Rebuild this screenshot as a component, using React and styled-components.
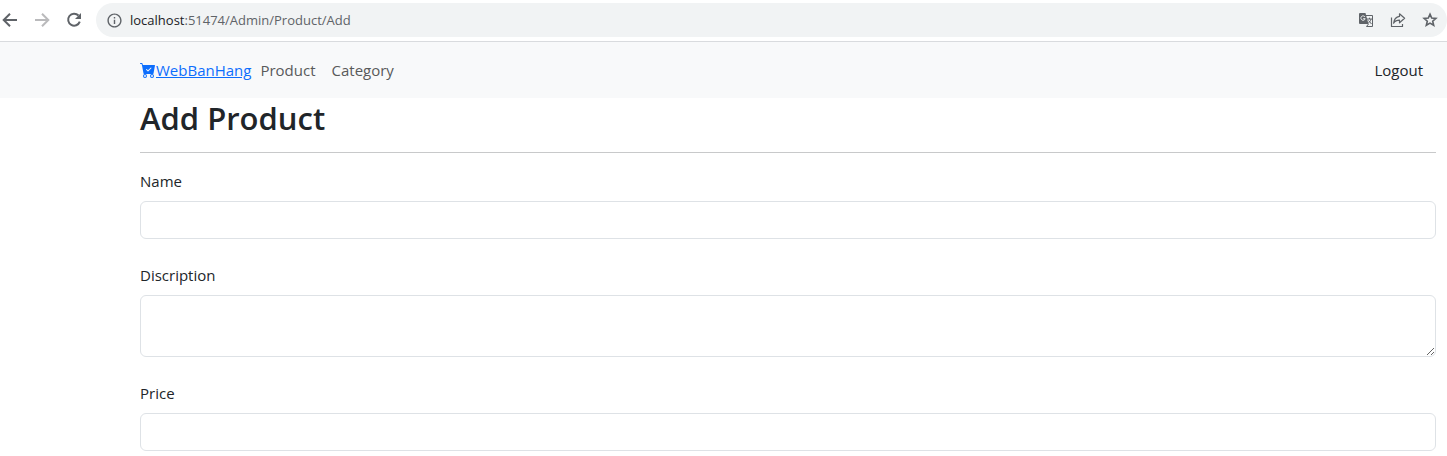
import React from "react";
import styled, { createGlobalStyle } from "styled-components";
import { MdInfoOutline } from "react-icons/md";
import { BsCartCheckFill } from "react-icons/bs";

const GlobalStyle = createGlobalStyle`
  *, *::before, *::after { box-sizing: border-box; }
  body {
    margin: 0;
    background: #fff;
    color: #212529;
    font-family: "Segoe UI", "Open Sans", "Noto Sans", sans-serif;
    font-size: 15px;
    line-height: 24px;
  }
`;

const Toolbar = styled.header`
  display: flex;
  align-items: center;
  gap: 12px;
  height: 42px;
  padding-bottom: 1px;
  border-bottom: 1px solid #d9dbde;
`;

const ToolButtons = styled.div`
  display: flex;
  align-items: center;
  gap: 12px;
`;

const IconButton = styled.button`
  display: flex;
  align-items: center;
  justify-content: center;
  width: 20px;
  height: 20px;
  padding: 0;
  border: 0;
  background: none;
  color: #5f6368;
  &:disabled { color: #bababc; }
  svg { flex: none; }
`;

const AddressBar = styled.div`
  display: flex;
  flex: 1;
  align-items: center;
  height: 34px;
  padding: 0 7px 0 8px;
  border-radius: 17px;
  background: #f1f3f4;
`;

const Address = styled.span`
  flex: 1;
  margin-left: 6px;
  font-size: 13px;
  line-height: 20px;
  color: #5f6368;
`;

const Host = styled.span`
  color: #202124;
`;

const Navbar = styled.nav`
  display: flex;
  align-items: center;
  height: 56px;
  padding: 0 24px 0 140px;
  background: #f8f9fa;
`;

const Brand = styled.a`
  display: flex;
  align-items: center;
  margin-right: 9px;
  color: #0d6efd;
  text-decoration: none;
  span { text-decoration: underline; }
`;

const NavLink = styled.a`
  margin-right: 16px;
  color: #595a5b;
  text-decoration: none;
`;

const Logout = styled.a`
  margin-left: auto;
  color: #212529;
  text-decoration: none;
`;

const Main = styled.main`
  padding: 0 11px 0 140px;
`;

const Title = styled.h1`
  margin: 0;
  padding-top: 2px;
  font-size: 31px;
  line-height: 36px;
  font-weight: 600;
`;

const Divider = styled.hr`
  margin: 16px 0;
  border: 0;
  border-top: 1px solid #c8c9ca;
`;

const Field = styled.div`
  display: flex;
  flex-direction: column;
  gap: 8px;
  margin-bottom: 24px;
  &:last-child { margin-bottom: 0; }
`;

const Label = styled.label`
  align-self: flex-start;
`;

const Input = styled.input`
  width: 100%;
  height: 38px;
  padding: 6px 12px;
  border: 1px solid #dee2e6;
  border-radius: 6px;
  background: #fff;
  color: inherit;
  font: inherit;
`;

const TextArea = styled.textarea`
  display: block;
  width: 100%;
  height: 62px;
  padding: 6px 12px;
  border: 1px solid #dee2e6;
  border-radius: 6px;
  background: #fff;
  color: inherit;
  font: inherit;
  resize: vertical;
`;

const PageActions = styled.div`
  display: flex;
  gap: 12px;
`;

function ArrowIcon({ forward }) {
  return (
    <svg width="20" height="20" viewBox="0 0 20 20" fill="none" stroke="currentColor" strokeWidth="2">
      {forward
        ? <path d="M3 10H16M10 3.700L16.300 10L10 16.300" />
        : <path d="M17 10H4M10 3.700L3.700 10L10 16.300" />}
    </svg>
  );
}

function ReloadIcon() {
  return (
    <svg width="20" height="20" viewBox="0 0 20 20" fill="none" stroke="currentColor" strokeWidth="2">
      <path d="M14.500 5.500A6 6 0 1 0 15.800 11.700" />
      <path d="M17 3V9H11Z" fill="currentColor" stroke="none" />
    </svg>
  );
}

function TranslateIcon() {
  return (
    <svg width="16" height="16" viewBox="0 0 16 16" fill="none" stroke="currentColor">
      <path d="M7.500 3.500H14.500V14.500H8.500" />
      <path d="M2 1H7.500L10.500 12H2A1 1 0 0 1 1 11V2A1 1 0 0 1 2 1Z" fill="currentColor" stroke="none" />
      <path d="M7 5A2.200 2.200 0 1 0 7.200 6.700H5.200" stroke="#f1f3f4" />
      <path d="M9 7H14M11.500 5.700V7M13 7C12.600 9 11.500 10.200 10.300 11M10.500 8.500L13.500 12M8.500 14.500L10.500 12" />
    </svg>
  );
}

function ShareIcon() {
  return (
    <svg width="16" height="16" viewBox="0 0 16 16" fill="none" stroke="currentColor" strokeWidth="1.2" strokeLinejoin="round">
      <path d="M1.5 5.5V14.500H12.500V12" />
      <path d="M9.5 1.8L14.6 6.3L9.5 10.8V8.2C6.7 8.2 4.8 9.2 3.6 11.2C4 7.600 5.900 5 9.500 4.400Z" />
    </svg>
  );
}

function StarIcon() {
  return (
    <svg width="18" height="18" viewBox="0 0 18 18" fill="none" stroke="currentColor" strokeWidth="1.6">
      <path d="M9 3.200L10.700 7L14.900 7.400L11.700 10.200L12.700 14.300L9 12.100L5.300 14.300L6.300 10.200L3.100 7.400L7.300 7Z" />
    </svg>
  );
}

export default function App() {
  return (
    <>
      <GlobalStyle />
      <Toolbar>
        <ToolButtons>
          <IconButton aria-label="Back"><ArrowIcon /></IconButton>
          <IconButton aria-label="Forward" disabled><ArrowIcon forward /></IconButton>
          <IconButton aria-label="Reload"><ReloadIcon /></IconButton>
        </ToolButtons>
        <AddressBar>
          <IconButton aria-label="Site information"><MdInfoOutline size={17} /></IconButton>
          <Address><Host>localhost</Host>:51474/Admin/Product/Add</Address>
          <PageActions>
            <IconButton aria-label="Translate"><TranslateIcon /></IconButton>
            <IconButton aria-label="Share"><ShareIcon /></IconButton>
            <IconButton aria-label="Bookmark"><StarIcon /></IconButton>
          </PageActions>
        </AddressBar>
      </Toolbar>
      <Navbar>
        <Brand href="#"><BsCartCheckFill size={16} /><span>WebBanHang</span></Brand>
        <NavLink href="#">Product</NavLink>
        <NavLink href="#">Category</NavLink>
        <Logout href="#">Logout</Logout>
      </Navbar>
      <Main>
        <Title>Add Product</Title>
        <Divider />
        <form>
          <Field>
            <Label htmlFor="name">Name</Label>
            <Input id="name" type="text" />
          </Field>
          <Field>
            <Label htmlFor="description">Discription</Label>
            <TextArea id="description" />
          </Field>
          <Field>
            <Label htmlFor="price">Price</Label>
            <Input id="price" type="text" />
          </Field>
        </form>
      </Main>
    </>
  );
}
